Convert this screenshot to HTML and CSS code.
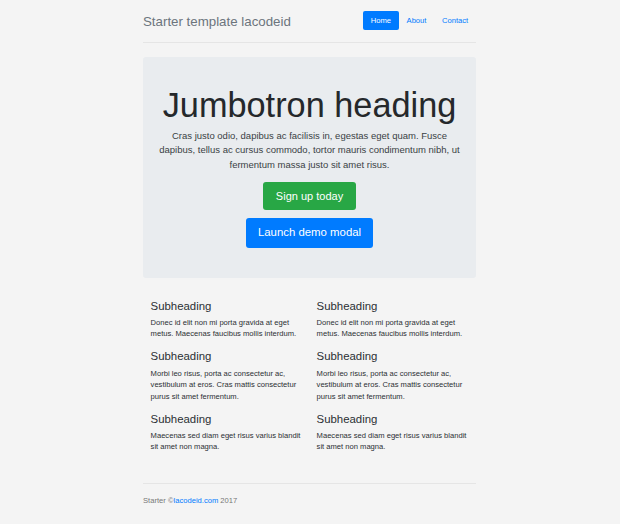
FILE: index.html
```html
<!DOCTYPE html>
<html lang="en">
<head>
<meta charset="utf-8">
<title>Starter template lacodeid</title>
<link rel="stylesheet" href="styles.css">
</head>
<body>
<div class="page">
  <div class="container">
    <header class="header">
      <h3 class="header-title">Starter template lacodeid</h3>
      <ul class="nav">
        <li><a class="nav-link active" href="#">Home</a></li>
        <li><a class="nav-link" href="#">About</a></li>
        <li><a class="nav-link" href="#">Contact</a></li>
      </ul>
    </header>

    <section class="jumbotron">
      <h1 class="display">Jumbotron heading</h1>
      <p class="lead">Cras justo odio, dapibus ac facilisis in, egestas eget quam. Fusce dapibus, tellus ac cursus commodo, tortor mauris condimentum nibh, ut fermentum massa justo sit amet risus.</p>
      <div class="actions">
        <a class="btn btn-success" href="#">Sign up today</a>
        <button class="btn btn-primary" type="button">Launch demo modal</button>
      </div>
    </section>

    <section class="marketing">
      <div class="col">
        <h4 class="sub">Subheading</h4>
        <p class="text">Donec id elit non mi porta gravida at eget metus. Maecenas faucibus mollis interdum.</p>
        <h4 class="sub">Subheading</h4>
        <p class="text">Morbi leo risus, porta ac consectetur ac, vestibulum at eros. Cras mattis consectetur purus sit amet fermentum.</p>
        <h4 class="sub">Subheading</h4>
        <p class="text">Maecenas sed diam eget risus varius blandit sit amet non magna.</p>
      </div>
      <div class="col">
        <h4 class="sub">Subheading</h4>
        <p class="text">Donec id elit non mi porta gravida at eget metus. Maecenas faucibus mollis interdum.</p>
        <h4 class="sub">Subheading</h4>
        <p class="text">Morbi leo risus, porta ac consectetur ac, vestibulum at eros. Cras mattis consectetur purus sit amet fermentum.</p>
        <h4 class="sub">Subheading</h4>
        <p class="text">Maecenas sed diam eget risus varius blandit sit amet non magna.</p>
      </div>
    </section>

    <footer class="footer">
      <p class="footer-text">Starter ©<a class="footer-link" href="#">lacodeid.com</a> 2017</p>
    </footer>
  </div>
</div>
</body>
</html>
```

FILE: styles.css
```css
html, body {
  margin: 0;
  padding: 0;
  background: #ffffff;
}

body {
  font-family: "Liberation Sans", Arial, Helvetica, sans-serif;
  color: #212529;
}

.page {
  background: #f4f4f4;
  padding: 11.4px 1px 17.6px 0;
}

.container {
  width: 333px;
  margin: 0 auto;
}

/* Header */
.header {
  display: flex;
  justify-content: space-between;
  align-items: flex-start;
  padding-bottom: 7.6px;
  border-bottom: 1px solid #e5e5e5;
}

.header-title {
  margin: 0;
  font-size: 13.3px;
  line-height: 22.8px;
  font-weight: 400;
  color: #6c757d;
}

.nav {
  display: flex;
  list-style: none;
  margin: 0;
  padding: 0;
}

.nav-link {
  display: block;
  padding: 3.5px 7.8px;
  font-size: 7.6px;
  line-height: 11.4px;
  color: #007bff;
  text-decoration: none;
  border-radius: 2px;
}

.nav-link.active {
  background: #007bff;
  color: #ffffff;
}

/* Jumbotron */
.jumbotron {
  margin-top: 14.2px;
  background: #e9ecef;
  border-radius: 3px;
  padding: 30.5px 15.2px 30px;
  text-align: center;
}

.display {
  margin: 0 0 3.8px;
  font-size: 34.3px;
  line-height: 37.7px;
  font-weight: 300;
  color: #25282b;
}

.lead {
  margin: 0;
  font-size: 9.5px;
  line-height: 14.3px;
  font-weight: 300;
  color: #3a3f44;
}

.actions {
  display: flex;
  flex-direction: column;
  align-items: center;
  gap: 7.4px;
  margin-top: 9.8px;
}

.btn {
  display: inline-block;
  font-family: inherit;
  font-size: 11px;
  line-height: 16.5px;
  padding: 6px 12.5px;
  border: 0;
  border-radius: 3px;
  color: #ffffff;
  text-decoration: none;
  cursor: pointer;
}

.btn-success {
  background: #28a745;
}

.btn-primary {
  background: #007bff;
  font-size: 11.4px;
  padding: 6.75px 11.5px;
}

/* Marketing */
.marketing {
  display: grid;
  grid-template-columns: 1fr 1fr;
  column-gap: 14.2px;
  padding: 0 7.6px;
  margin: 22px 0 30px;
}

.sub {
  margin: 0 0 3.8px;
  font-size: 11.4px;
  line-height: 13.7px;
  font-weight: 400;
  color: #2b2f33;
}

.text + .sub {
  margin-top: 10.5px;
}

.text {
  margin: 0;
  font-size: 7.6px;
  line-height: 11.4px;
  color: #2b2f33;
}

/* Footer */
.footer {
  border-top: 1px solid #e5e5e5;
  padding-top: 11.4px;
}

.footer-text {
  margin: 0;
  font-size: 7.6px;
  line-height: 11.4px;
  color: #777777;
}

.footer-link {
  color: #007bff;
  text-decoration: none;
}
```
